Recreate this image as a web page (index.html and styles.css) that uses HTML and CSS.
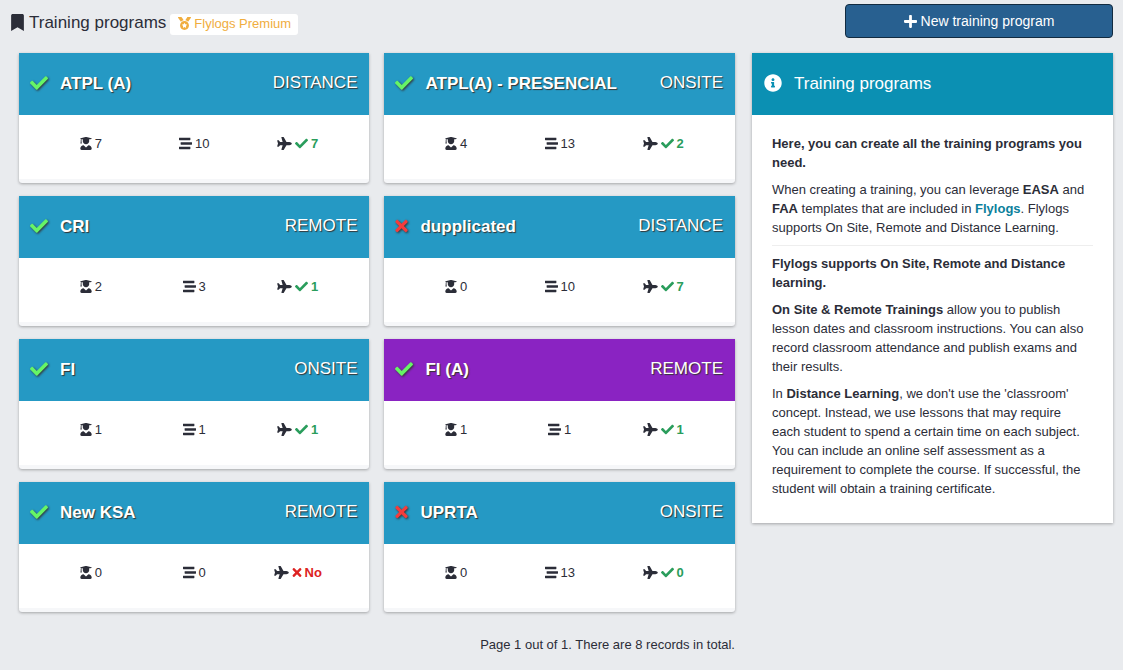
FILE: index.html
```html
<!DOCTYPE html>
<html lang="en">
<head>
<meta charset="utf-8">
<title>Training programs</title>
<link rel="stylesheet" href="styles.css">
</head>
<body>
<svg class="sprite" aria-hidden="true">
  <symbol id="check" viewBox="0 0 512 512"><path d="M173.898 439.404l-166.4-166.4c-9.997-9.997-9.997-26.206 0-36.204l36.203-36.204c9.997-9.998 26.207-9.998 36.204 0L192 312.69 432.095 72.596c9.997-9.997 26.207-9.997 36.204 0l36.203 36.204c9.997 9.997 9.997 26.206 0 36.204l-294.4 294.401c-9.998 9.997-26.207 9.997-36.204-.001z"/></symbol>
  <symbol id="times" viewBox="0 0 352 512"><path d="M242.72 256l100.07-100.07c12.28-12.28 12.28-32.19 0-44.48l-22.24-22.24c-12.28-12.28-32.19-12.28-44.48 0L176 189.28 75.93 89.21c-12.28-12.28-32.19-12.28-44.48 0L9.21 111.45c-12.28 12.28-12.28 32.19 0 44.48L109.28 256 9.21 356.07c-12.28 12.28-12.28 32.19 0 44.48l22.24 22.24c12.28 12.28 32.2 12.28 44.48 0L176 322.72l100.07 100.07c12.28 12.28 32.2 12.28 44.48 0l22.24-22.24c12.28-12.28 12.28-32.19 0-44.48L242.72 256z"/></symbol>
  <symbol id="plane" viewBox="0 0 576 512"><path d="M480 192H365.71L260.61 8.06A16.014 16.014 0 0 0 246.71 0h-65.5c-10.63 0-18.3 10.17-15.38 20.39L214.86 192H112l-43.2-57.6c-3.02-4.03-7.77-6.4-12.8-6.4H16.01C5.6 128-2.04 137.78.49 147.88L32 256 .49 364.12C-2.04 374.22 5.6 384 16.01 384H56c5.04 0 9.78-2.37 12.8-6.4L112 320h102.86l-49.03 171.6c-2.92 10.22 4.75 20.4 15.38 20.4h65.5c5.74 0 11.04-3.08 13.89-8.06L365.71 320H480c35.35 0 96-28.65 96-64s-60.65-64-96-64z"/></symbol>
  <symbol id="bookmark" viewBox="0 0 384 512"><path d="M0 512V48C0 21.49 21.49 0 48 0h288c26.51 0 48 21.49 48 48v464L192 400 0 512z"/></symbol>
  <symbol id="plus" viewBox="0 0 448 512"><path d="M416 208H272V64c0-17.67-14.33-32-32-32h-32c-17.67 0-32 14.33-32 32v144H32c-17.67 0-32 14.33-32 32v32c0 17.67 14.33 32 32 32h144v144c0 17.67 14.33 32 32 32h32c17.67 0 32-14.33 32-32V304h144c17.67 0 32-14.33 32-32v-32c0-17.67-14.33-32-32-32z"/></symbol>
  <symbol id="stream" viewBox="0 0 512 512"><path d="M16 128h416c8.84 0 16-7.16 16-16V48c0-8.84-7.16-16-16-16H16C7.16 32 0 39.16 0 48v64c0 8.84 7.16 16 16 16zm480 80H80c-8.84 0-16 7.16-16 16v64c0 8.84 7.16 16 16 16h416c8.84 0 16-7.16 16-16v-64c0-8.84-7.16-16-16-16zm-64 176H16c-8.84 0-16 7.16-16 16v64c0 8.84 7.16 16 16 16h416c8.84 0 16-7.16 16-16v-64c0-8.84-7.16-16-16-16z"/></symbol>
  <symbol id="student" viewBox="0 0 448 512"><path d="M319.4 320.6L224 416l-95.4-95.4C57.1 323.7 0 382.2 0 454.4v9.6c0 26.5 21.5 48 48 48h352c26.5 0 48-21.5 48-48v-9.6c0-72.2-57.1-130.7-128.6-133.8zM13.6 79.8l6.4 1.5v58.4c-7 4.2-12 11.5-12 20.3 0 8.4 4.6 15.4 11.1 19.7L3.5 242c-1.7 6.9 2.1 14 7.6 14h41.8c5.5 0 9.3-7.1 7.6-14l-15.6-62.3C51.4 175.4 56 168.4 56 160c0-8.8-5-16.1-12-20.3V87.1l66 15.9c-8.6 17.2-14 36.4-14 57 0 70.7 57.3 128 128 128s128-57.3 128-128c0-20.6-5.3-39.8-14-57l96.3-23.2c18.2-4.4 18.2-27.1 0-31.5l-190.4-46c-13-3.1-26.7-3.1-39.7 0L13.6 48.2c-18.1 4.4-18.1 27.2 0 31.6z"/></symbol>
  <symbol id="info" viewBox="0 0 512 512"><path d="M256 8C119.043 8 8 119.083 8 256c0 136.997 111.043 248 248 248s248-111.003 248-248C504 119.083 392.957 8 256 8zm0 110c23.196 0 42 18.804 42 42s-18.804 42-42 42-42-18.804-42-42 18.804-42 42-42zm56 254c0 6.627-5.373 12-12 12h-88c-6.627 0-12-5.373-12-12v-24c0-6.627 5.373-12 12-12h12v-64h-12c-6.627 0-12-5.373-12-12v-24c0-6.627 5.373-12 12-12h64c6.627 0 12 5.373 12 12v100h12c6.627 0 12 5.373 12 12v24z"/></symbol>
  <symbol id="medal" viewBox="0 0 512 512"><path fill-rule="evenodd" d="M223.75 130.75L154.62 15.54A32 32 0 0 0 127.18 0H16.03C3.08 0-4.5 14.57 2.92 25.18l111.27 158.96c29.72-27.77 67.52-46.83 109.56-53.39zM495.97 0H384.82c-11.24 0-21.66 5.9-27.44 15.54l-69.13 115.21c42.04 6.56 79.84 25.62 109.56 53.38L509.08 25.18C516.5 14.57 508.92 0 495.97 0zM256 160c-97.2 0-176 78.8-176 176s78.8 176 176 176 176-78.8 176-176-78.8-176-176-176zm92.52 157.26l-37.93 36.96 8.97 52.22c1.6 9.36-8.26 16.51-16.65 12.09L256 393.88l-46.9 24.65c-8.4 4.45-18.25-2.74-16.65-12.09l8.97-52.22-37.93-36.96c-6.82-6.64-3.05-18.23 6.35-19.59l52.43-7.64 23.43-47.52c2.11-4.28 6.19-6.39 10.28-6.39 4.11 0 8.22 2.14 10.33 6.39l23.43 47.52 52.43 7.64c9.4 1.36 13.17 12.95 6.35 19.59z"/></symbol>
</svg>

<header class="topbar">
  <h1 class="page-title"><svg class="icon-bookmark"><use href="#bookmark"/></svg>Training programs</h1>
  <span class="badge"><svg class="icon-medal"><use href="#medal"/></svg>Flylogs Premium</span>
  <button type="button" class="new-button"><svg class="icon-plus"><use href="#plus"/></svg>New training program</button>
</header>

<div class="layout">
  <main>
    <div class="cards">
      <article class="card">
        <header class="card-head"><svg class="status on"><use href="#check"/></svg><h2 class="name">ATPL (A)</h2><span class="mode">DISTANCE</span></header>
        <div class="stats">
          <span class="stat"><svg class="i-student"><use href="#student"/></svg>7</span>
          <span class="stat"><svg class="i-stream"><use href="#stream"/></svg>10</span>
          <span class="stat"><svg class="i-plane"><use href="#plane"/></svg><b class="yes"><svg class="i-check"><use href="#check"/></svg>7</b></span>
        </div>
      </article>
      <article class="card">
        <header class="card-head"><svg class="status on"><use href="#check"/></svg><h2 class="name">ATPL(A) - PRESENCIAL</h2><span class="mode">ONSITE</span></header>
        <div class="stats">
          <span class="stat"><svg class="i-student"><use href="#student"/></svg>4</span>
          <span class="stat"><svg class="i-stream"><use href="#stream"/></svg>13</span>
          <span class="stat"><svg class="i-plane"><use href="#plane"/></svg><b class="yes"><svg class="i-check"><use href="#check"/></svg>2</b></span>
        </div>
      </article>
      <article class="card">
        <header class="card-head"><svg class="status on"><use href="#check"/></svg><h2 class="name">CRI</h2><span class="mode">REMOTE</span></header>
        <div class="stats">
          <span class="stat"><svg class="i-student"><use href="#student"/></svg>2</span>
          <span class="stat"><svg class="i-stream"><use href="#stream"/></svg>3</span>
          <span class="stat"><svg class="i-plane"><use href="#plane"/></svg><b class="yes"><svg class="i-check"><use href="#check"/></svg>1</b></span>
        </div>
      </article>
      <article class="card">
        <header class="card-head"><svg class="status off"><use href="#times"/></svg><h2 class="name">dupplicated</h2><span class="mode">DISTANCE</span></header>
        <div class="stats">
          <span class="stat"><svg class="i-student"><use href="#student"/></svg>0</span>
          <span class="stat"><svg class="i-stream"><use href="#stream"/></svg>10</span>
          <span class="stat"><svg class="i-plane"><use href="#plane"/></svg><b class="yes"><svg class="i-check"><use href="#check"/></svg>7</b></span>
        </div>
      </article>
      <article class="card">
        <header class="card-head"><svg class="status on"><use href="#check"/></svg><h2 class="name">FI</h2><span class="mode">ONSITE</span></header>
        <div class="stats">
          <span class="stat"><svg class="i-student"><use href="#student"/></svg>1</span>
          <span class="stat"><svg class="i-stream"><use href="#stream"/></svg>1</span>
          <span class="stat"><svg class="i-plane"><use href="#plane"/></svg><b class="yes"><svg class="i-check"><use href="#check"/></svg>1</b></span>
        </div>
      </article>
      <article class="card">
        <header class="card-head purple"><svg class="status on"><use href="#check"/></svg><h2 class="name">FI (A)</h2><span class="mode">REMOTE</span></header>
        <div class="stats">
          <span class="stat"><svg class="i-student"><use href="#student"/></svg>1</span>
          <span class="stat"><svg class="i-stream"><use href="#stream"/></svg>1</span>
          <span class="stat"><svg class="i-plane"><use href="#plane"/></svg><b class="yes"><svg class="i-check"><use href="#check"/></svg>1</b></span>
        </div>
      </article>
      <article class="card">
        <header class="card-head"><svg class="status on"><use href="#check"/></svg><h2 class="name">New KSA</h2><span class="mode">REMOTE</span></header>
        <div class="stats">
          <span class="stat"><svg class="i-student"><use href="#student"/></svg>0</span>
          <span class="stat"><svg class="i-stream"><use href="#stream"/></svg>0</span>
          <span class="stat"><svg class="i-plane"><use href="#plane"/></svg><b class="no"><svg class="i-times"><use href="#times"/></svg>No</b></span>
        </div>
      </article>
      <article class="card">
        <header class="card-head"><svg class="status off"><use href="#times"/></svg><h2 class="name">UPRTA</h2><span class="mode">ONSITE</span></header>
        <div class="stats">
          <span class="stat"><svg class="i-student"><use href="#student"/></svg>0</span>
          <span class="stat"><svg class="i-stream"><use href="#stream"/></svg>13</span>
          <span class="stat"><svg class="i-plane"><use href="#plane"/></svg><b class="yes"><svg class="i-check"><use href="#check"/></svg>0</b></span>
        </div>
      </article>
    </div>
    <p class="pager">Page 1 out of 1. There are 8 records in total.</p>
  </main>

  <aside class="help">
    <header class="help-head"><svg class="icon-info"><use href="#info"/></svg><h2 class="help-title">Training programs</h2></header>
    <div class="help-body">
      <p><b>Here, you can create all the training programs you need.</b></p>
      <p>When creating a training, you can leverage <b>EASA</b> and <b>FAA</b> templates that are included in <a class="link" href="#">Flylogs</a>. Flylogs supports On Site, Remote and Distance Learning.</p>
      <hr class="rule">
      <p><b>Flylogs supports On Site, Remote and Distance learning.</b></p>
      <p><b>On Site &amp; Remote Trainings</b> allow you to publish lesson dates and classroom instructions. You can also record classroom attendance and publish exams and their results.</p>
      <p>In <b>Distance Learning</b>, we don't use the 'classroom' concept. Instead, we use lessons that may require each student to spend a certain time on each subject. You can include an online self assessment as a requirement to complete the course. If successful, the student will obtain a training certificate.</p>
    </div>
  </aside>
</div>
</body>
</html>
```
FILE: styles.css
```css
* { box-sizing: border-box; }
body {
  margin: 0;
  padding: 4px 10px 16px 11px;
  background: #e9ebee;
  color: #2b2d38;
  font-family: "Liberation Sans", Arial, sans-serif;
  font-size: 13px;
  line-height: 19px;
}
.sprite { display: none; }
svg { fill: currentColor; flex: none; }

.topbar { display: flex; align-items: center; height: 34px; }
.page-title {
  display: flex;
  align-items: center;
  gap: 5px;
  margin: 0;
  padding-top: 2px;
  font-size: 17px;
  font-weight: 400;
}
.icon-bookmark { width: 13px; height: 17px; }
.badge {
  display: flex;
  align-items: center;
  gap: 3px;
  height: 21px;
  margin: 6px 0 0 4px;
  padding: 0 7px 2px 8px;
  border-radius: 3px;
  background: #fff;
  color: #f0ad3e;
}
.icon-medal { width: 13px; height: 13px; }
.new-button {
  display: flex;
  align-items: center;
  justify-content: center;
  gap: 4px;
  width: 268px;
  height: 34px;
  margin-left: auto;
  border: 1px solid #122b40;
  border-radius: 4px;
  background: #286090;
  color: #fff;
  font: 14px "Liberation Sans", Arial, sans-serif;
}
.icon-plus { width: 13px; height: 15px; }

.layout {
  display: grid;
  grid-template-columns: minmax(0, 1fr) 33%;
  gap: 17px;
  align-items: start;
  margin-top: 15px;
  padding-left: 8px;
}
.cards {
  display: grid;
  grid-template-columns: repeat(2, minmax(0, 1fr));
  gap: 13px 15px;
}
.card {
  border-bottom: 4px solid #f6f7f9;
  border-radius: 0 0 3px 3px;
  background: #fff;
  box-shadow: 0 1px 3px rgba(0, 0, 0, .3);
}
.card-head, .help-head {
  display: flex;
  align-items: center;
  height: 62px;
  padding: 0 12px 2px 11px;
  color: #fff;
  font-size: 17px;
}
.card-head { background: #2599c4; text-shadow: 1px 1px 1px #333; }
.card-head.purple { background: #8a23c2; }
.status { height: 18px; margin-right: 12px; filter: drop-shadow(1px 1px 1px #333); }
.on { width: 18px; color: #66f566; }
.off { width: 13px; color: #f43c3c; }
.name, .help-title { margin: 0; font-size: 17px; }
.mode { margin-left: auto; padding-bottom: 2px; }
.stats {
  display: grid;
  grid-template-columns: repeat(3, minmax(0, 1fr));
  padding: 19px 20px 26px;
}
.stat, .yes, .no { display: flex; align-items: center; justify-content: center; gap: 3px; }
.yes { color: #2a9d5c; }
.no { color: #dd2222; }
.i-student { width: 12px; height: 13px; }
.i-stream, .i-check { width: 13px; height: 13px; }
.i-plane { width: 15px; height: 13px; }
.i-times { width: 10px; height: 13px; }
.pager { margin: 23px 0 0; text-align: right; }

.help { background: #fff; box-shadow: 0 1px 3px rgba(0, 0, 0, .3); }
.help-head { padding-left: 12px; background: #0b90b3; }
.help-title { font-weight: 400; }
.icon-info { width: 18px; height: 18px; margin-right: 12px; }
.help-body { padding: 19px 20px 17px; }
.help-body p { margin: 0 0 8px; padding-right: 4px; }
.rule { margin: 8px 0; border: 0; border-top: 1px solid #eee; }
.link { color: #0b7f9c; font-weight: 700; text-decoration: none; }
```
